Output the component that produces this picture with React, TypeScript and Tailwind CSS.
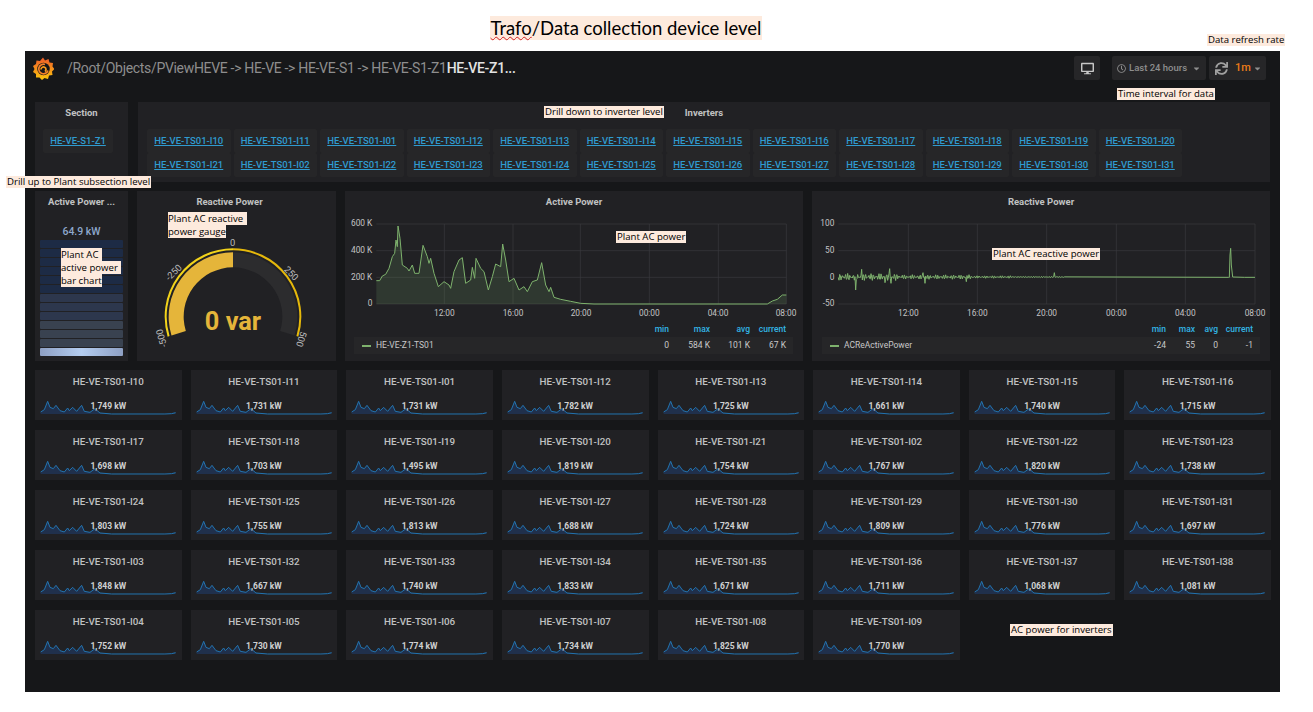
import React from 'react';
import {FaCaretDown, FaDesktop, FaRegClock, FaSync} from "react-icons/fa";

const ROW_ONE = ["I10", "I11", "I01", "I12", "I13", "I14", "I15", "I16", "I17", "I18", "I19", "I20"];
const ROW_TWO = ["I21", "I02", "I22", "I23", "I24", "I25", "I26", "I27", "I28", "I29", "I30", "I31"];

const CARDS = [
    ["I10", "1,749"], ["I11", "1,731"], ["I01", "1,731"], ["I12", "1,782"], ["I13", "1,725"], ["I14", "1,661"], ["I15", "1,740"], ["I16", "1,715"],
    ["I17", "1,698"], ["I18", "1,703"], ["I19", "1,495"], ["I20", "1,819"], ["I21", "1,754"], ["I02", "1,767"], ["I22", "1,820"], ["I23", "1,738"],
    ["I24", "1,803"], ["I25", "1,755"], ["I26", "1,813"], ["I27", "1,688"], ["I28", "1,724"], ["I29", "1,809"], ["I30", "1,776"], ["I31", "1,697"],
    ["I03", "1,848"], ["I32", "1,667"], ["I33", "1,740"], ["I34", "1,833"], ["I35", "1,671"], ["I36", "1,711"], ["I37", "1,068"], ["I38", "1,081"],
    ["I04", "1,752"], ["I05", "1,730"], ["I06", "1,774"], ["I07", "1,734"], ["I08", "1,825"], ["I09", "1,770"],
];

const BARS = [
    "bg-[#1d2b45]", "bg-[#1d2b45]", "bg-[#1d2b45]", "bg-[#1d2b45]", "bg-[#1d2b45]", "bg-[#1d2b45]",
    "bg-[#2d374d]", "bg-[#2d374d]", "bg-[#2d374d]", "bg-[#394250]", "bg-[#394250]", "bg-[#394250]",
];

const ACTIVE_LINE = "97,272 107,272 115,258 125,253 135,235 145,200 152,190 156,150 160,170 162,108 168,145 175,225 190,235 195,243 205,225 212,250 225,250 237,166 250,200 255,220 260,205 270,250 283,290 300,275 315,285 320,295 330,245 345,210 355,203 365,280 380,270 385,232 392,265 396,205 410,235 420,245 433,300 445,260 455,222 470,230 476,162 485,210 495,275 510,265 525,300 540,290 550,305 565,275 580,270 593,218 605,285 615,305 620,292 630,322 650,328 680,334 710,340 750,342 1270,342 1285,333 1300,328 1315,315 1327,315";

const SPARK = "47,142 58,135 68,110 75,128 85,132 93,122 105,138 118,142 128,130 133,138 143,128 155,140 170,122 178,140 195,143 210,132 225,145 260,148 420,148 440,147 452,144";

// rough noise for the reactive power trace, fixed spikes come from the picture
const reactiveLine = () => {
    const spikes: Record<number, number> = {134: 300, 152: 238, 222: 278, 236: 236, 240: 280, 336: 248, 342: 280, 466: 275, 730: 248};
    const pts: string[] = [];
    for (let x = 82; x <= 760; x += 2) {
        const fade = x < 260 ? 11 : x < 480 ? 7 : x < 600 ? 4 : 2;
        const wave = Math.sin(x * 1.7) * Math.cos(x * 0.63);
        const hit = Object.keys(spikes).find((k) => Number(k) === x);
        pts.push(`${x},${hit ? spikes[Number(hit)] : 261 + wave * fade}`);
    }
    pts.push("1252,262", "1255,262", "1257,195", "1259,175", "1261,225", "1265,261", "1300,262", "1332,262");
    return pts.join(" ");
};

const polar = (r: number, deg: number) => {
    const a = (deg * Math.PI) / 180;
    return `${702 + r * Math.cos(a)} ${440 + r * Math.sin(a)}`;
};

const arc = (r: number, from: number, to: number) => `M${polar(r, from)} A${r} ${r} 0 0 1 ${polar(r, to)}`;

const band = (outer: number, inner: number, from: number, to: number) =>
    `M${polar(outer, from)} A${outer} ${outer} 0 0 1 ${polar(outer, to)} L${polar(inner, to)} A${inner} ${inner} 0 0 0 ${polar(inner, from)} Z`;

const Note = ({className, children}: { className: string, children: React.ReactNode }) => (
    <div className={`absolute bg-[#fdeadd] text-black font-['Open_Sans',sans-serif] text-[9.6px] leading-[12px] whitespace-nowrap ${className}`}>
        {children}
    </div>
);

const LinkBox = ({label}: { label: string }) => (
    <div className="w-[83.5px] h-[23.5px] bg-[#262628] rounded-[2px] flex items-center justify-center">
        <span className="text-[#2f9bd0] underline text-[9.5px] font-medium">{label}</span>
    </div>
);

const Logo = () => (
    <svg width="21" height="23" viewBox="0 0 42 46" className="shrink-0">
        <defs>
            <linearGradient id="logoFill" x1="0" y1="0" x2="0" y2="1">
                <stop offset="0" stopColor="#ee5a2a"/>
                <stop offset="1" stopColor="#fcc70c"/>
            </linearGradient>
        </defs>
        <path
            d="M20 1l4 6 7-3 2 7 7 1-1 7 4 5-5 5 1 7-7 1-2 7-7-2-5 4-5-5-7 0 0-7-6-4 3-6-3-6 6-4 1-7 7 1z"
            fill="url(#logoFill)"/>
        <circle cx="21" cy="24" r="12.500" fill="#161719"/>
        <path d="M30 27a9.500 9.500 0 1 1-6-12" fill="none" stroke="#f4812a" strokeWidth="3.500"/>
        <path d="M16 25a5 5 0 1 1 8 4" fill="none" stroke="#f79a1c" strokeWidth="3.500"/>
    </svg>
);

const TopBar = () => (
    <div className="h-[24px] mt-[5px] ml-[8px] mr-[14px] flex items-center">
        <Logo/>
        <div className="ml-[13px] text-[14px] tracking-[-0.32px] text-[#8e8e8e] whitespace-nowrap">
            /Root/Objects/PViewHEVE -&gt; HE-VE -&gt; HE-VE-S1 -&gt; HE-VE-S1-Z1<span className="text-[#e3e3e3] font-medium">HE-VE-Z1...</span>
        </div>
        <div className="ml-auto flex items-center">
            <div className="w-[26px] h-[24px] bg-[#262628] rounded-[2px] flex items-center justify-center text-[#c8c8c8]">
                <FaDesktop className="text-[13px]"/>
            </div>
            <div className="ml-[12px] w-[94px] h-[24px] bg-[#262628] rounded-[2px] flex items-center pl-[5px] gap-[3px] text-[#8e8e8e] text-[9.500px] font-medium">
                <FaRegClock className="text-[9px]"/>
                <span>Last 24 hours</span>
                <FaCaretDown className="text-[9px] ml-[2px]"/>
            </div>
            <div className="ml-[3px] w-[57px] h-[24px] bg-[#262628] rounded-[2px] flex items-center pl-[6px] text-[11px] font-medium">
                <FaSync className="text-[13px] text-[#a0a0a0]"/>
                <span className="ml-[7px] text-[#eb7b18]">1m</span>
                <FaCaretDown className="text-[9px] ml-[2px] text-[#8e8e8e]"/>
            </div>
        </div>
    </div>
);

const SelectorRow = () => (
    <div className="mt-[22px] mx-[10px] flex gap-[10px] h-[80px]">
        <div className="w-[93px] bg-[#212124] pt-[5px] flex flex-col">
            <div className="text-center text-[#c0c1c2] text-[9.500px] font-bold leading-[12px]">Section</div>
            <div className="mt-[10px] ml-[8px] w-[70px] h-[24px] bg-[#262628] rounded-[2px] flex items-center justify-center">
                <span className="text-[#2f9bd0] underline text-[9.500px] font-medium">HE-VE-S1-Z1</span>
            </div>
        </div>
        <div className="flex-1 bg-[#212124] pt-[5px]">
            <div className="text-center text-[#c0c1c2] text-[9.500px] font-bold leading-[12px]">Inverters</div>
            <div className="mt-[10px] ml-[9px] flex flex-col gap-[0.5px]">
                <div className="flex gap-[3px]">
                    {ROW_ONE.map((id) => <LinkBox key={id} label={`HE-VE-TS01-${id}`}/>)}
                </div>
                <div className="flex gap-[3px]">
                    {ROW_TWO.map((id) => <LinkBox key={id} label={`HE-VE-TS01-${id}`}/>)}
                </div>
            </div>
        </div>
    </div>
);

const PanelTitle = ({children, className = ""}: { children: React.ReactNode, className?: string }) => (
    <div className={`h-[24px] pt-[5px] text-center text-[#c0c1c2] text-[9.500px] font-bold leading-[12px] whitespace-nowrap ${className}`}>{children}</div>
);

const BarGauge = () => (
    <div className="w-[94px] bg-[#212124] flex flex-col items-center">
        <PanelTitle>Active Power ...</PanelTitle>
        <div className="mt-[10px] text-[#8ea8cc] text-[10.500px] font-medium leading-[14px]">64.9 kW</div>
        <div className="mt-[1px] w-[83px] flex flex-col gap-px">
            {BARS.map((color, i) => <div key={i} className={`h-[8px] rounded-[1px] ${color}`}/>)}
            <div className="h-[8px] rounded-[1px] bg-gradient-to-r from-[#8ea0c4] via-[#b4cdf0] to-[#8ea0c4]"/>
        </div>
    </div>
);

const Gauge = () => (
    <div className="w-[199px] bg-[#212124]">
        <PanelTitle className="pr-[14px]">Reactive Power</PanelTitle>
        <svg width="199" height="146" viewBox="414 135 597 438" className="block">
            <path d={arc(202, 163, 270)} fill="none" stroke="#f2d31a" strokeWidth="6"/>
            <path d={arc(202, 270, 377)} fill="none" stroke="#e5b80b" strokeWidth="6"/>
            <path d={band(193, 148, 163, 270)} fill="#e5b53a"/>
            <path d={band(193, 148, 270, 377)} fill="#2c2c2e"/>
            <g fill="#bcbcbc" fontSize="28" textAnchor="middle" fontFamily="Roboto, sans-serif">
                <text x="701" y="229">0</text>
                <text x="0" y="0" transform="translate(531,314) rotate(-45)">-250</text>
                <text x="0" y="0" transform="translate(870,317) rotate(45)">250</text>
                <text x="0" y="0" transform="translate(497,502) rotate(-107)">-500</text>
                <text x="0" y="0" transform="translate(898,505) rotate(107)">500</text>
            </g>
            <text x="702" y="481" textAnchor="middle" fill="#e5b53a" fontSize="76" fontWeight="700"
                  fontFamily="Roboto, sans-serif">0 var
            </text>
        </svg>
    </div>
);

const Legend = ({name, columns, values}: { name: string, columns: string[], values: string[] }) => (
    <div>
        <div className="flex justify-end h-[15px] items-center text-[#33b5e5] text-[8.500px] font-medium pr-[7px]">
            {["min", "max", "avg", "current"].map((head, i) => (
                <span key={head} className={`text-right ${columns[i]}`}>{head}</span>
            ))}
        </div>
        <div className="h-[17px] bg-[#262628] flex items-center text-[#c8c8c8] text-[8.500px] pl-[8px] pr-[7px]">
            <span className="w-[9px] h-[2px] bg-[#7eb26d] mr-[5px]"/>
            <span className="mr-auto">{name}</span>
            {values.map((v, i) => (
                <span key={i} className={`text-right ${columns[i]}`}>{v}</span>
            ))}
        </div>
    </div>
);

const ActiveChart = () => (
    <div className="w-[458px] bg-[#212124]">
        <PanelTitle>Active Power</PanelTitle>
        <svg width="458" height="107" viewBox="3 75 1374 321" className="block">
            <g stroke="#3b3b3e" strokeWidth="2" fill="none">
                <path d="M97 102H1327M97 182H1327M97 262H1327M97 342H1327"/>
                <path d="M301 102V342M507 102V342M709 102V342M916 102V342M1123 102V342M1327 102V342"/>
            </g>
            <polygon points={`${ACTIVE_LINE} 1327,342 97,342`} fill="#7eb26d" fillOpacity="0.16"/>
            <polyline points={ACTIVE_LINE} fill="none" stroke="#7eb26d" strokeWidth="3"/>
            <g fill="#c4c4c4" fontSize="25" fontFamily="Roboto, sans-serif">
                <g textAnchor="end">
                    <text x="85" y="109">600 K</text>
                    <text x="85" y="189">400 K</text>
                    <text x="85" y="269">200 K</text>
                    <text x="85" y="349">0</text>
                </g>
                <g textAnchor="middle">
                    <text x="301" y="377">12:00</text>
                    <text x="507" y="377">16:00</text>
                    <text x="711" y="377">20:00</text>
                    <text x="916" y="377">00:00</text>
                    <text x="1122" y="377">04:00</text>
                    <text x="1326" y="377">08:00</text>
                </g>
            </g>
        </svg>
        <div className="ml-[9px] mr-[10px]">
            <Legend name="HE-VE-Z1-TS01" columns={["w-[40px]", "w-[41px]", "w-[40px]", "w-[36px]"]}
                    values={["0", "584 K", "101 K", "67 K"]}/>
        </div>
    </div>
);

const ReactiveChart = () => (
    <div className="w-[458px] bg-[#212124]">
        <PanelTitle>Reactive Power</PanelTitle>
        <svg width="458" height="107" viewBox="3 75 1374 321" className="block">
            <g stroke="#3b3b3e" strokeWidth="2" fill="none">
                <path d="M82 102H1332M82 182H1332M82 262H1332M82 342H1332"/>
                <path d="M292 102V342M499 102V342M707 102V342M916 102V342M1123 102V342M1332 102V342"/>
            </g>
            <polyline points={reactiveLine()} fill="none" stroke="#7eb26d" strokeWidth="3"/>
            <g fill="#c4c4c4" fontSize="25" fontFamily="Roboto, sans-serif">
                <g textAnchor="end">
                    <text x="70" y="109">100</text>
                    <text x="70" y="189">50</text>
                    <text x="70" y="269">0</text>
                    <text x="70" y="349">-50</text>
                </g>
                <g textAnchor="middle">
                    <text x="292" y="377">12:00</text>
                    <text x="499" y="377">16:00</text>
                    <text x="707" y="377">20:00</text>
                    <text x="916" y="377">00:00</text>
                    <text x="1123" y="377">04:00</text>
                    <text x="1332" y="377">08:00</text>
                </g>
            </g>
        </svg>
        <div className="ml-[10px] mr-[10px]">
            <Legend name="ACReActivePower" columns={["w-[29px]", "w-[29px]", "w-[23px]", "w-[35px]"]}
                    values={["-24", "55", "0", "-1"]}/>
        </div>
    </div>
);

const StatCard = ({id, value}: { id: string, value: string }) => (
    <div className="relative h-[50px] bg-[#212124]">
        <div className="h-[28px] pt-[5px] text-center text-[#c0c1c2] text-[9.800px] font-medium leading-[13px]">HE-VE-TS01-{id}</div>
        <svg width="146.600" height="20" viewBox="30 100 440 60" className="block">
            <polygon points={`${SPARK} 452,148 47,148`} fill="#1f60c4" fillOpacity="0.25"/>
            <polyline points={SPARK} fill="none" stroke="#2273b0" strokeWidth="3"/>
        </svg>
        <div className="absolute left-0 right-0 top-[30px] text-center text-[#d0d1d2] text-[8.500px] font-bold leading-[12px]">{value} kW</div>
    </div>
);

const App = () => {
    return (
        <div className="relative w-[1313px] h-[712px] overflow-hidden bg-white font-['Roboto',sans-serif]">
            <div className="h-[51px] flex justify-center">
                <div className="mt-[16px] h-[24px] ml-[-61px] px-px bg-[#fdeadd] text-black text-[18.500px] leading-[24px] font-['Lato',sans-serif] whitespace-nowrap">
                    <span className="underline decoration-wavy decoration-[#d02020] decoration-1">Trafo</span>/Data collection device level
                </div>
            </div>

            <div className="ml-[25px] w-[1255px] h-[641px] bg-[#161719] flex flex-col">
                <TopBar/>
                <SelectorRow/>
                <div className="mt-[9px] mx-[10px] h-[170px] flex gap-[9px]">
                    <BarGauge/>
                    <Gauge/>
                    <ActiveChart/>
                    <ReactiveChart/>
                </div>
                <div className="mt-[9px] mx-[10px] w-[1236px] grid grid-cols-8 gap-x-[9px] gap-y-[10px]">
                    {CARDS.map(([id, value]) => <StatCard key={id} id={id} value={value}/>)}
                </div>
            </div>

            <Note className="left-[6px] top-[176px] px-px">Drill up to Plant subsection level</Note>
            <Note className="left-[544px] top-[106px] px-px">Drill down to inverter level</Note>
            <Note className="left-[1207px] top-[34px] px-px">Data refresh rate</Note>
            <Note className="left-[1117px] top-[88px] px-px">Time interval for data</Note>
            <Note className="left-[616px] top-[231px] px-px">Plant AC power</Note>
            <Note className="left-[992px] top-[248px] px-px">Plant AC reactive power</Note>
            <Note className="left-[1010px] top-[624px] px-px">AC power for inverters</Note>
            <Note className="left-[61px] top-[248px] w-[60px] !bg-transparent leading-[13px]">
                <span className="bg-[#fdeadd] block w-[41px]">Plant AC</span>
                <span className="bg-[#fdeadd] block w-[60px]">active power</span>
                <span className="bg-[#fdeadd] block w-[41px]">bar chart</span>
            </Note>
            <Note className="left-[168px] top-[212px] w-[79px] !bg-transparent leading-[13px]">
                <span className="bg-[#fdeadd] block w-[79px]">Plant AC reactive</span>
                <span className="bg-[#fdeadd] block w-[58px]">power gauge</span>
            </Note>
        </div>
    )
}

export default App
